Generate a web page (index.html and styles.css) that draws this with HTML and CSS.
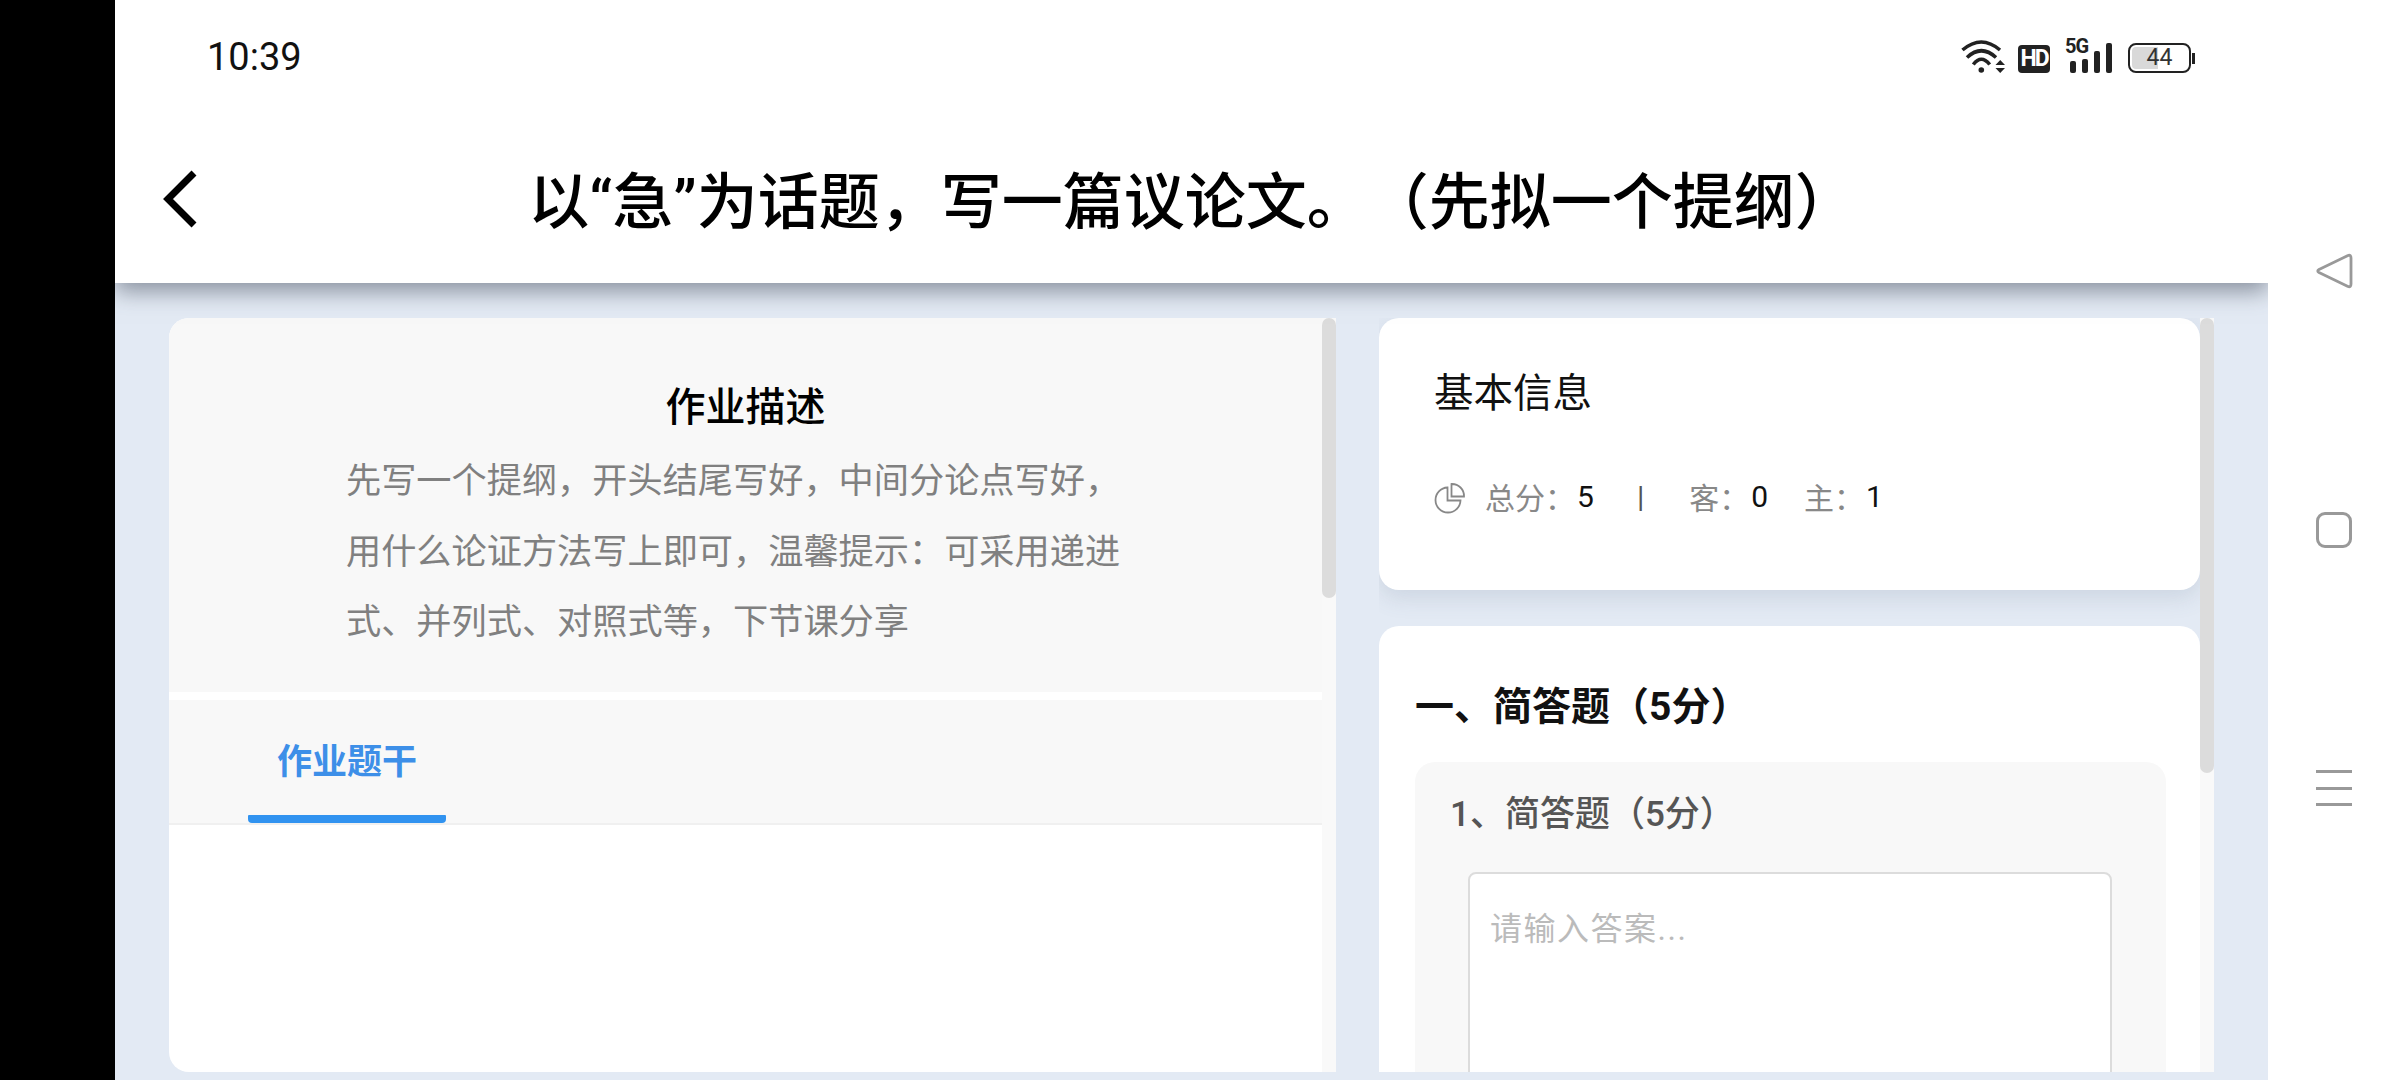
FILE: index.html
```html
<!DOCTYPE html>
<html lang="zh-CN">
<head>
  <meta charset="UTF-8">
  <meta name="viewport" content="width=device-width, initial-scale=1.0">
  <title>作业详情</title>
  <link rel="stylesheet" href="styles.css">
</head>
<body>

  <div class="side-black"></div>

  <div class="screen">
    <div class="header">
      <!-- Status bar -->
      <div class="status-bar">
        <span class="time">10:39</span>
        <div class="status-icons">
          <svg class="wifi" viewBox="0 0 45 34" width="45" height="34">
            <g fill="none" stroke="#222" stroke-width="3.6">
              <path d="M1.5 10Q20.3 -6 39 10"/>
              <path d="M6 17.5Q20.3 4 35 17.5"/>
              <path d="M12.3 24.5Q20.3 14 28.7 24.5"/>
            </g>
            <circle cx="20.3" cy="30" r="2.8" fill="#222"/>
            <path d="M39.2 20L44 25H34.5ZM34.5 28H44L39.2 33Z" fill="#222"/>
          </svg>
          <span class="hd">HD</span>
          <div class="signal">
            <span class="five-g">5G</span>
            <i class="bar bar-1"></i>
            <i class="bar bar-2"></i>
            <i class="bar bar-3"></i>
            <i class="bar bar-4"></i>
          </div>
          <div class="battery">
            <div class="battery-body">
              <div class="battery-fill"></div>
              <span class="battery-num">44</span>
            </div>
            <div class="battery-cap"></div>
          </div>
        </div>
      </div>

      <!-- Title bar -->
      <div class="title-bar">
        <svg class="back" viewBox="0 0 36 60" width="36" height="60">
          <path d="M32 4L6 30L32 56" fill="none" stroke="#000" stroke-width="7"/>
        </svg>
        <h1>以“急”为话题，写一篇议论文。（先拟一个提纲）</h1>
      </div>
    </div>

    <div class="content">
      <!-- Left column -->
      <div class="column column-left">
        <div class="left-card">
          <div class="desc">
            <h2>作业描述</h2>
            <p>先写一个提纲，开头结尾写好，中间分论点写好，用什么论证方法写上即可，温馨提示：可采用递进式、并列式、对照式等，下节课分享</p>
          </div>
          <div class="tabs">
            <div class="tab">
              <span class="tab-text">作业题干</span>
              <i class="tab-line"></i>
            </div>
          </div>
        </div>
        <div class="track track-left"><div class="thumb thumb-left"></div></div>
      </div>

      <!-- Right column -->
      <div class="column column-right">
        <div class="right-pane">
          <div class="card info-card">
            <h3>基本信息</h3>
            <div class="meta">
              <svg class="pie" viewBox="0 0 32 32" width="32" height="32">
                <g fill="none" stroke="#888" stroke-width="1.8">
                  <path d="M13.5 5.5A12.5 12.5 0 1 0 26.500 18.500H13.500Z"/>
                  <path d="M17.500 2A12 12 0 0 1 30 14.500H17.500Z"/>
                </g>
              </svg>
              <span class="label label-first">总分：</span><span class="value">5</span>
              <span class="sep">|</span>
              <span class="label">客：</span><span class="value">0</span>
              <span class="label label-gap">主：</span><span class="value">1</span>
            </div>
          </div>

          <div class="card question-card">
            <h4>一、简答题（5分）</h4>
            <div class="question">
              <div class="question-title">1、简答题（5分）</div>
              <div class="answer">请输入答案...</div>
            </div>
          </div>
        </div>
        <div class="track track-right"><div class="thumb thumb-right"></div></div>
      </div>
    </div>
  </div>

  <!-- Navigation keys -->
  <div class="nav-keys">
    <svg viewBox="0 0 38 36" width="38" height="36">
      <path d="M33 2.500Q36 1.500 36 5V31Q36 34.500 33 33.500L4 19.500Q1.500 18 4 16.500Z" fill="none" stroke="#999" stroke-width="2.800" stroke-linejoin="round"/>
    </svg>
    <div class="nav-square"></div>
    <div class="nav-lines"><i></i><i></i><i></i></div>
  </div>

</body>
</html>
```

FILE: styles.css
```css
* {
  box-sizing: border-box;
}

body {
  margin: 0;
  width: 2400px;
  height: 1080px;
  display: flex;
  overflow: hidden;
  background: #fff;
  font-family: Roboto, "Noto Sans CJK SC", sans-serif;
  color: #000;
  text-spacing-trim: space-all;
}

.side-black {
  width: 115px;
  background: #000;
}

.screen {
  width: 2153px;
  display: flex;
  flex-direction: column;
  overflow: hidden;
}

.header {
  position: relative;
  z-index: 2;
  background: #fff;
  box-shadow: 0 8px 22px rgba(60, 70, 85, 0.55);
}

/* status bar */
.status-bar {
  height: 114px;
  padding: 0 73px 0 92px;
  display: flex;
  justify-content: space-between;
  align-items: center;
}

.time {
  font-size: 38px;
  color: #111;
}

.status-icons {
  display: flex;
  align-items: flex-end;
  height: 34px;
}

.wifi {
  margin-right: 12px;
}

.hd {
  width: 32px;
  height: 28px;
  margin-bottom: 1px;
  margin-right: 17px;
  border-radius: 4px;
  background: #222;
  color: #fff;
  font-size: 23px;
  font-weight: 700;
  line-height: 28px;
  text-align: center;
  letter-spacing: -2px;
}

.signal {
  position: relative;
  display: flex;
  align-items: flex-end;
  gap: 6px;
  height: 33px;
  margin-bottom: 1px;
  margin-right: 16px;
  padding-left: 3px;
}

.five-g {
  position: absolute;
  left: -2px;
  top: -4px;
  font-size: 20px;
  font-weight: 700;
  line-height: 20px;
  letter-spacing: -1px;
  color: #222;
}

.bar {
  width: 6px;
  border-radius: 2px;
  background: #222;
}

.bar-1 {
  height: 12px;
}

.bar-2 {
  height: 14px;
}

.bar-3 {
  height: 22px;
}

.bar-4 {
  height: 30px;
}

.battery {
  display: flex;
  align-items: center;
  margin-bottom: 1px;
}

.battery-body {
  position: relative;
  width: 63px;
  height: 30px;
  border: 2.5px solid #222;
  border-radius: 8px;
  text-align: center;
}

.battery-fill {
  position: absolute;
  left: 2px;
  top: 2px;
  bottom: 2px;
  width: 44%;
  border-radius: 4px 0 0 4px;
  background: #d9d9d9;
}

.battery-num {
  position: relative;
  font-size: 23px;
  line-height: 25px;
  display: block;
  color: #333;
}

.battery-cap {
  width: 3px;
  height: 11px;
  margin-left: 1px;
  background: #222;
}

/* title bar */
.title-bar {
  height: 169px;
  padding: 0 82px 0 47px;
  display: flex;
  align-items: center;
}

.back {
  flex: none;
}

.title-bar h1 {
  flex: 1;
  margin: 0;
  padding-top: 9px;
  font-size: 61px;
  font-weight: 500;
  line-height: 80px;
  text-align: center;
}

/* content */
.content {
  flex: 1;
  min-height: 0;
  padding: 35px 54px 8px;
  display: flex;
  gap: 43px;
  background: #e3eaf4;
}

.column {
  display: flex;
  min-width: 0;
}

.column-left {
  width: 1167px;
}

.column-right {
  width: 835px;
}

.track {
  flex: none;
  background: #f9f9f9;
}

.track-left {
  width: 14px;
}

.track-right {
  width: 14px;
}

.thumb {
  border-radius: 7px;
  background: #dcdcdc;
}

.thumb-left {
  height: 280px;
}

.thumb-right {
  height: 455px;
}

.left-card {
  flex: 1;
  display: flex;
  flex-direction: column;
  background: #fff;
  border-radius: 20px 0 0 20px;
  overflow: hidden;
}

.desc {
  height: 374px;
  padding-top: 62px;
  background: #f8f8f8;
}

.desc h2 {
  margin: 0;
  font-size: 40px;
  font-weight: 500;
  line-height: 56px;
  text-align: center;
}

.desc p {
  width: 780px;
  margin: 10px 0 0 177px;
  font-size: 35.2px;
  line-height: 70.5px;
  color: #808080;
}

.tabs {
  height: 125px;
  margin-top: 8px;
  padding-left: 79px;
  background: #f8f8f8;
  border-bottom: 2px solid #f0f0f0;
}

.tab {
  width: 198px;
  height: 123px;
  display: flex;
  flex-direction: column;
  justify-content: space-between;
  align-items: center;
}

.tab-text {
  margin-top: 40px;
  font-size: 35px;
  font-weight: 700;
  line-height: 46px;
  color: #3d8fe8;
}

.tab-line {
  width: 100%;
  height: 8px;
  border-radius: 1px 1px 4px 4px;
  background: #3193f0;
}

.right-pane {
  flex: 1;
  min-width: 0;
  overflow: hidden;
}

.card {
  background: #fff;
  border-radius: 20px;
}

.info-card {
  height: 272px;
  margin-bottom: 36px;
  padding: 48px 0 0 55px;
  box-shadow: 0 8px 22px rgba(90, 105, 130, 0.16);
}

.info-card h3 {
  margin: 0;
  font-size: 39.5px;
  font-weight: 400;
  line-height: 56px;
  color: #111;
}

.meta {
  margin-top: 54px;
  display: flex;
  align-items: center;
  height: 40px;
  font-size: 30px;
}

.pie {
  margin-top: 4px;
}

.label {
  color: #888;
}

.label-first {
  margin-left: 19px;
}

.label-gap {
  margin-left: 36px;
}

.value {
  color: #111;
  margin-left: 2px;
}

.sep {
  margin: 0 45px 0 43px;
  color: #555;
}

.question-card {
  height: 700px;
  padding: 55px 34px 0 36px;
}

.question-card h4 {
  margin: 0 0 29px;
  font-size: 39px;
  font-weight: 700;
  line-height: 52px;
  color: #111;
}

.question {
  height: 500px;
  padding: 30px 54px 0 53px;
  background: #f8f8f8;
  border-radius: 20px;
}

.question-title {
  margin-left: -18px;
  font-size: 35px;
  font-weight: 500;
  line-height: 46px;
  color: #555;
}

.answer {
  height: 340px;
  margin-top: 34px;
  padding: 32px 20px;
  background: #fff;
  border: 2px solid #dcdcdc;
  border-radius: 8px;
  font-size: 32px;
  line-height: 46px;
  letter-spacing: 1.5px;
  color: #bbb;
}

/* navigation keys */
.nav-keys {
  width: 132px;
  display: flex;
  flex-direction: column;
  align-items: center;
  padding-top: 253px;
  background: #fff;
}

.nav-square {
  width: 36px;
  height: 36px;
  margin-top: 223px;
  border: 3px solid #999;
  border-radius: 9px;
}

.nav-lines {
  width: 36px;
  margin-top: 222px;
  display: flex;
  flex-direction: column;
  gap: 13.5px;
}

.nav-lines i {
  height: 3px;
  background: #999;
}
```
